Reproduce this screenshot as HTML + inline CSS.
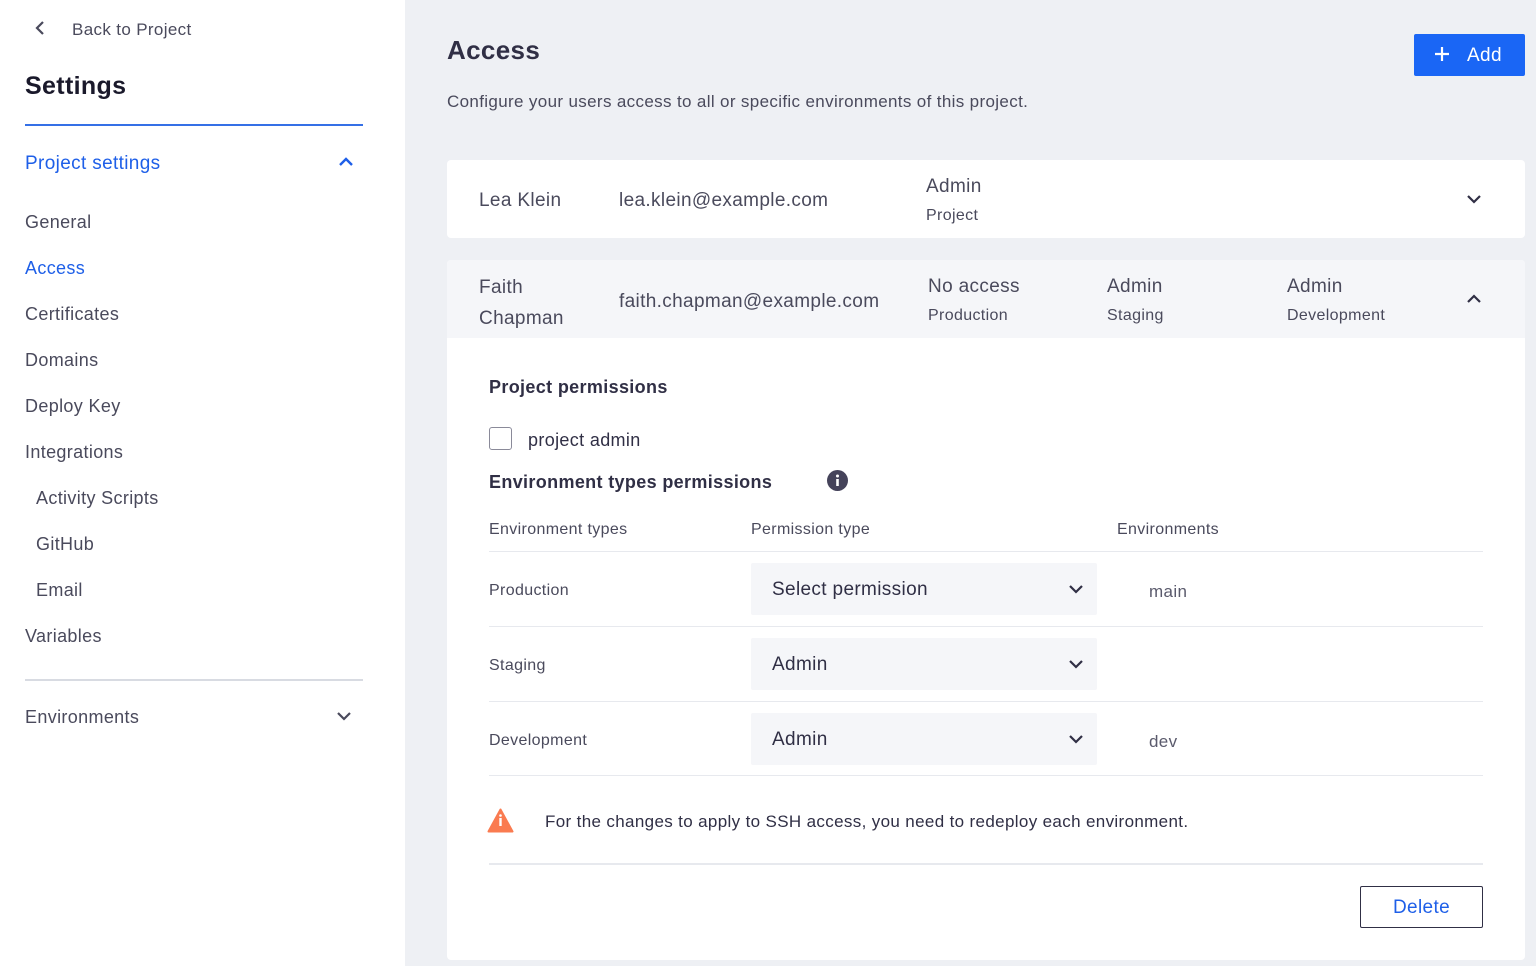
<!DOCTYPE html>
<html><head><style>
*{margin:0;padding:0;box-sizing:border-box}
body{width:1536px;height:966px;overflow:hidden;background:#eef0f4;font-family:"Liberation Sans",sans-serif;color:#302f45;position:relative;letter-spacing:0.35px}
.a{position:absolute;white-space:nowrap;margin-top:2px}
#side{position:absolute;left:0;top:0;width:405px;height:966px;background:#fff}
.nav{font-size:18px;color:#4a4a5c}
.card{position:absolute;left:447px;width:1078px;background:#fff;border-radius:4px}
.sel{position:absolute;left:751px;width:346px;height:52px;background:#f5f6f9;border-radius:2px;font-size:19px;color:#302f45;padding:16px 21px 0}
.hr{position:absolute;left:489px;width:994px;height:1px;background:#e7e9ee}
svg{position:absolute}
</style></head><body>
<div id="side">
<svg style="left:34px;top:20px" width="14" height="16" viewBox="0 0 14 16"><path d="M9 2L3 8l6 6" stroke="#4a4a5c" stroke-width="2.2" fill="none"/></svg>
<div class="a" style="left:72px;top:18px;font-size:17px;color:#4a4a5c">Back to Project</div>
<div class="a" style="left:25px;top:70px;font-size:25px;font-weight:bold;color:#1a192b">Settings</div>
<div class="a" style="left:25px;top:122px;width:338px;height:2px;background:#3570e6"></div>
<div class="a" style="left:25px;top:151px;font-size:19px;color:#1e5fe8">Project settings</div>
<svg style="left:338px;top:156px" width="16" height="12" viewBox="0 0 16 12"><path d="M2 9l6-6 6 6" stroke="#1e5fe8" stroke-width="2.4" fill="none"/></svg>
<div class="a nav" style="left:25px;top:210px">General</div>
<div class="a nav" style="left:25px;top:256px;color:#1e5fe8">Access</div>
<div class="a nav" style="left:25px;top:302px">Certificates</div>
<div class="a nav" style="left:25px;top:348px">Domains</div>
<div class="a nav" style="left:25px;top:394px">Deploy Key</div>
<div class="a nav" style="left:25px;top:440px">Integrations</div>
<div class="a nav" style="left:36px;top:486px">Activity Scripts</div>
<div class="a nav" style="left:36px;top:532px">GitHub</div>
<div class="a nav" style="left:36px;top:578px">Email</div>
<div class="a nav" style="left:25px;top:624px">Variables</div>
<div class="a" style="left:25px;top:677px;width:338px;height:2px;background:#d8dbe2"></div>
<div class="a nav" style="left:25px;top:705px">Environments</div>
<svg style="left:336px;top:710px" width="16" height="12" viewBox="0 0 16 12"><path d="M2 3l6 6 6-6" stroke="#4a4a5c" stroke-width="2.2" fill="none"/></svg>
</div>

<div class="a" style="left:447px;top:33px;font-size:26px;font-weight:bold;color:#302f45">Access</div>
<div class="a" style="left:447px;top:90px;font-size:17px;color:#4a4a5c">Configure your users access to all or specific environments of this project.</div>
<div style="position:absolute;left:1414px;top:34px;width:111px;height:42px;background:#1a66f5;border-radius:2px;color:#fff;font-size:19px;padding:11px 0 0 53px">Add</div>
<svg style="left:1434px;top:46px" width="16" height="16" viewBox="0 0 16 16"><path d="M8 1v14M1 8h14" stroke="#fff" stroke-width="2.2"/></svg>

<div class="card" style="top:160px;height:78px"></div>
<div class="a" style="left:479px;top:188px;font-size:19px;color:#4a4a5c">Lea Klein</div>
<div class="a" style="left:619px;top:188px;font-size:19px;color:#4a4a5c">lea.klein@example.com</div>
<div class="a" style="left:926px;top:174px;font-size:19px;color:#4a4a5c">Admin</div>
<div class="a" style="left:926px;top:205px;font-size:16px;color:#4a4a5c">Project</div>
<svg style="left:1466px;top:193px" width="16" height="12" viewBox="0 0 16 12"><path d="M2 3l6 6 6-6" stroke="#302f45" stroke-width="2.2" fill="none"/></svg>

<div class="card" style="top:260px;height:700px"></div>
<div style="position:absolute;left:447px;top:260px;width:1078px;height:78px;background:#f5f6f9;border-radius:4px 4px 0 0"></div>
<div class="a" style="left:479px;top:270px;font-size:19px;line-height:31px;color:#4a4a5c">Faith<br>Chapman</div>
<div class="a" style="left:619px;top:289px;font-size:19px;color:#4a4a5c">faith.chapman@example.com</div>
<div class="a" style="left:928px;top:274px;font-size:19px;color:#4a4a5c">No access</div>
<div class="a" style="left:928px;top:305px;font-size:16px;color:#4a4a5c">Production</div>
<div class="a" style="left:1107px;top:274px;font-size:19px;color:#4a4a5c">Admin</div>
<div class="a" style="left:1107px;top:305px;font-size:16px;color:#4a4a5c">Staging</div>
<div class="a" style="left:1287px;top:274px;font-size:19px;color:#4a4a5c">Admin</div>
<div class="a" style="left:1287px;top:305px;font-size:16px;color:#4a4a5c">Development</div>
<svg style="left:1466px;top:293px" width="16" height="12" viewBox="0 0 16 12"><path d="M2 9l6-6 6 6" stroke="#302f45" stroke-width="2.2" fill="none"/></svg>

<div class="a" style="left:489px;top:375px;font-size:18px;font-weight:bold;color:#302f45">Project permissions</div>
<div style="position:absolute;left:489px;top:427px;width:23px;height:23px;border:1.5px solid #8a8a99;border-radius:3px"></div>
<div class="a" style="left:528px;top:428px;font-size:18px;color:#302f45">project admin</div>
<div class="a" style="left:489px;top:470px;font-size:18px;font-weight:bold;color:#302f45">Environment types permissions</div>
<svg style="left:827px;top:470px" width="21" height="21" viewBox="0 0 21 21"><circle cx="10.5" cy="10.5" r="10.5" fill="#45435a"/><rect x="9.2" y="9" width="2.6" height="7" fill="#fff"/><circle cx="10.5" cy="6" r="1.5" fill="#fff"/></svg>
<div class="a" style="left:489px;top:519px;font-size:16px;color:#4a4a5c">Environment types</div>
<div class="a" style="left:751px;top:519px;font-size:16px;color:#4a4a5c">Permission type</div>
<div class="a" style="left:1117px;top:519px;font-size:16px;color:#4a4a5c">Environments</div>
<div class="hr" style="top:551px"></div>
<div class="a" style="left:489px;top:580px;font-size:16px;color:#4a4a5c">Production</div>
<div class="sel" style="top:563px">Select permission</div>
<div class="a" style="left:1149px;top:580px;font-size:17px;color:#5a5a6c">main</div>
<div class="hr" style="top:626px"></div>
<div class="a" style="left:489px;top:655px;font-size:16px;color:#4a4a5c">Staging</div>
<div class="sel" style="top:638px">Admin</div>
<div class="hr" style="top:701px"></div>
<div class="a" style="left:489px;top:730px;font-size:16px;color:#4a4a5c">Development</div>
<div class="sel" style="top:713px">Admin</div>
<div class="a" style="left:1149px;top:730px;font-size:17px;color:#5a5a6c">dev</div>
<div class="hr" style="top:775px"></div>
<svg style="left:1068px;top:583px" width="16" height="12" viewBox="0 0 16 12"><path d="M2 3l6 6 6-6" stroke="#302f45" stroke-width="2.2" fill="none"/></svg>
<svg style="left:1068px;top:658px" width="16" height="12" viewBox="0 0 16 12"><path d="M2 3l6 6 6-6" stroke="#302f45" stroke-width="2.2" fill="none"/></svg>
<svg style="left:1068px;top:733px" width="16" height="12" viewBox="0 0 16 12"><path d="M2 3l6 6 6-6" stroke="#302f45" stroke-width="2.2" fill="none"/></svg>

<svg style="left:487px;top:808px" width="27" height="25" viewBox="0 0 27 25"><path d="M13.5 1.5L25.5 23.5H1.5Z" fill="#fa7b50" stroke="#fa7b50" stroke-width="2" stroke-linejoin="round"/><rect x="12.3" y="10" width="2.4" height="8" fill="#fff"/><circle cx="13.5" cy="7.5" r="1.3" fill="#fff"/></svg>
<div class="a" style="left:545px;top:810px;font-size:17px;color:#302f45">For the changes to apply to SSH access, you need to redeploy each environment.</div>
<div class="hr" style="top:863px;height:2px"></div>
<div style="position:absolute;left:1360px;top:886px;width:123px;height:42px;border:1.5px solid #302f45;border-radius:2px;text-align:center;font-size:19px;color:#1e5fe8;padding-top:10px">Delete</div>
</body></html>
